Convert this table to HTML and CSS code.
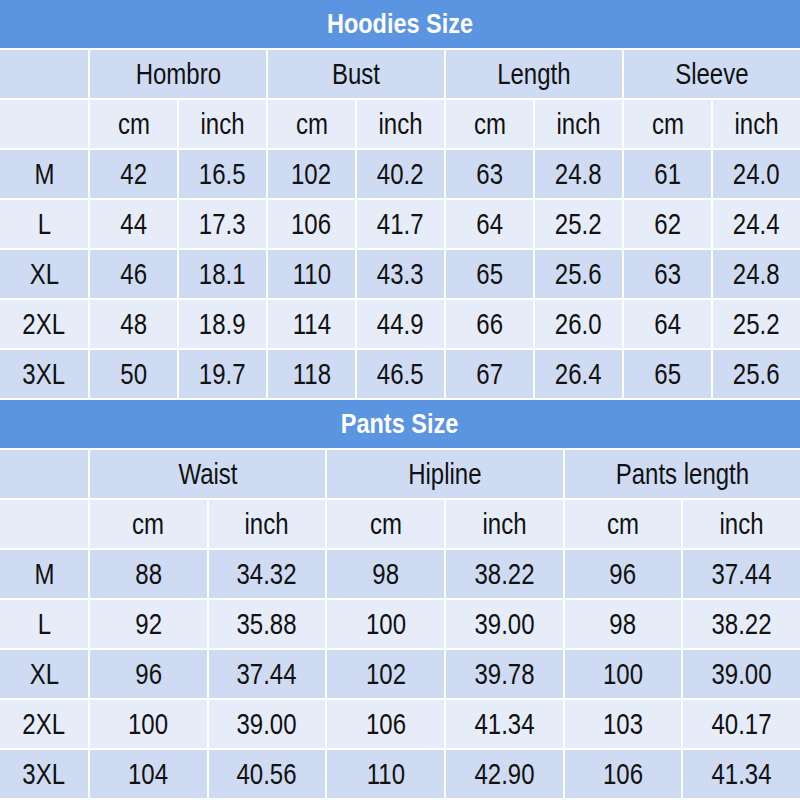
FILE: index.html
```html
<!DOCTYPE html>
<html>
<head>
<meta charset="utf-8">
<link rel="stylesheet" href="styles.css">
</head>
<body>
<div class="chart">
  <div class="title"><span>Hoodies Size</span></div>
  <div class="grid hoodies">
    <div class="cell dark"></div>
    <div class="cell dark span2"><span>Hombro</span></div>
    <div class="cell dark span2"><span>Bust</span></div>
    <div class="cell dark span2"><span>Length</span></div>
    <div class="cell dark span2"><span>Sleeve</span></div>

    <div class="cell light"></div>
    <div class="cell light"><span>cm</span></div><div class="cell light"><span>inch</span></div>
    <div class="cell light"><span>cm</span></div><div class="cell light"><span>inch</span></div>
    <div class="cell light"><span>cm</span></div><div class="cell light"><span>inch</span></div>
    <div class="cell light"><span>cm</span></div><div class="cell light"><span>inch</span></div>

    <div class="cell dark"><span>M</span></div>
    <div class="cell dark"><span>42</span></div><div class="cell dark"><span>16.5</span></div>
    <div class="cell dark"><span>102</span></div><div class="cell dark"><span>40.2</span></div>
    <div class="cell dark"><span>63</span></div><div class="cell dark"><span>24.8</span></div>
    <div class="cell dark"><span>61</span></div><div class="cell dark"><span>24.0</span></div>

    <div class="cell light"><span>L</span></div>
    <div class="cell light"><span>44</span></div><div class="cell light"><span>17.3</span></div>
    <div class="cell light"><span>106</span></div><div class="cell light"><span>41.7</span></div>
    <div class="cell light"><span>64</span></div><div class="cell light"><span>25.2</span></div>
    <div class="cell light"><span>62</span></div><div class="cell light"><span>24.4</span></div>

    <div class="cell dark"><span>XL</span></div>
    <div class="cell dark"><span>46</span></div><div class="cell dark"><span>18.1</span></div>
    <div class="cell dark"><span>110</span></div><div class="cell dark"><span>43.3</span></div>
    <div class="cell dark"><span>65</span></div><div class="cell dark"><span>25.6</span></div>
    <div class="cell dark"><span>63</span></div><div class="cell dark"><span>24.8</span></div>

    <div class="cell light"><span>2XL</span></div>
    <div class="cell light"><span>48</span></div><div class="cell light"><span>18.9</span></div>
    <div class="cell light"><span>114</span></div><div class="cell light"><span>44.9</span></div>
    <div class="cell light"><span>66</span></div><div class="cell light"><span>26.0</span></div>
    <div class="cell light"><span>64</span></div><div class="cell light"><span>25.2</span></div>

    <div class="cell dark"><span>3XL</span></div>
    <div class="cell dark"><span>50</span></div><div class="cell dark"><span>19.7</span></div>
    <div class="cell dark"><span>118</span></div><div class="cell dark"><span>46.5</span></div>
    <div class="cell dark"><span>67</span></div><div class="cell dark"><span>26.4</span></div>
    <div class="cell dark"><span>65</span></div><div class="cell dark"><span>25.6</span></div>
  </div>

  <div class="title"><span>Pants Size</span></div>
  <div class="grid pants">
    <div class="cell dark"></div>
    <div class="cell dark span2"><span>Waist</span></div>
    <div class="cell dark span2"><span>Hipline</span></div>
    <div class="cell dark span2"><span>Pants length</span></div>

    <div class="cell light"></div>
    <div class="cell light"><span>cm</span></div><div class="cell light"><span>inch</span></div>
    <div class="cell light"><span>cm</span></div><div class="cell light"><span>inch</span></div>
    <div class="cell light"><span>cm</span></div><div class="cell light"><span>inch</span></div>

    <div class="cell dark"><span>M</span></div>
    <div class="cell dark"><span>88</span></div><div class="cell dark"><span>34.32</span></div>
    <div class="cell dark"><span>98</span></div><div class="cell dark"><span>38.22</span></div>
    <div class="cell dark"><span>96</span></div><div class="cell dark"><span>37.44</span></div>

    <div class="cell light"><span>L</span></div>
    <div class="cell light"><span>92</span></div><div class="cell light"><span>35.88</span></div>
    <div class="cell light"><span>100</span></div><div class="cell light"><span>39.00</span></div>
    <div class="cell light"><span>98</span></div><div class="cell light"><span>38.22</span></div>

    <div class="cell dark"><span>XL</span></div>
    <div class="cell dark"><span>96</span></div><div class="cell dark"><span>37.44</span></div>
    <div class="cell dark"><span>102</span></div><div class="cell dark"><span>39.78</span></div>
    <div class="cell dark"><span>100</span></div><div class="cell dark"><span>39.00</span></div>

    <div class="cell light"><span>2XL</span></div>
    <div class="cell light"><span>100</span></div><div class="cell light"><span>39.00</span></div>
    <div class="cell light"><span>106</span></div><div class="cell light"><span>41.34</span></div>
    <div class="cell light"><span>103</span></div><div class="cell light"><span>40.17</span></div>

    <div class="cell dark"><span>3XL</span></div>
    <div class="cell dark"><span>104</span></div><div class="cell dark"><span>40.56</span></div>
    <div class="cell dark"><span>110</span></div><div class="cell dark"><span>42.90</span></div>
    <div class="cell dark"><span>106</span></div><div class="cell dark"><span>41.34</span></div>
  </div>
</div>
</body>
</html>
```

FILE: styles.css
```css
html, body {
  margin: 0;
  padding: 0;
  background: #ffffff;
}

.chart {
  width: 800px;
  height: 800px;
  display: flex;
  flex-direction: column;
  gap: 2px;
  font-family: "Liberation Sans", Arial, sans-serif;
  color: #111111;
}

.title {
  height: 48px;
  background: #5b94e1;
  color: #ffffff;
  font-weight: bold;
  font-size: 27px;
  display: flex;
  align-items: center;
  justify-content: center;
}

.title span {
  display: inline-block;
  transform: scaleX(0.87);
}

.grid {
  display: grid;
  gap: 2px;
  grid-auto-rows: 48px;
}

.hoodies {
  grid-template-columns: 88px repeat(8, 1fr);
}

.pants {
  grid-template-columns: 88px repeat(6, 1fr);
}

.cell {
  display: flex;
  align-items: center;
  justify-content: center;
  font-size: 30px;
}

.cell span {
  display: inline-block;
  transform: scaleX(0.8);
  white-space: nowrap;
}

.span2 {
  grid-column: span 2;
}

.dark {
  background: #cfdbf2;
}

.light {
  background: #e7edf8;
}
```
